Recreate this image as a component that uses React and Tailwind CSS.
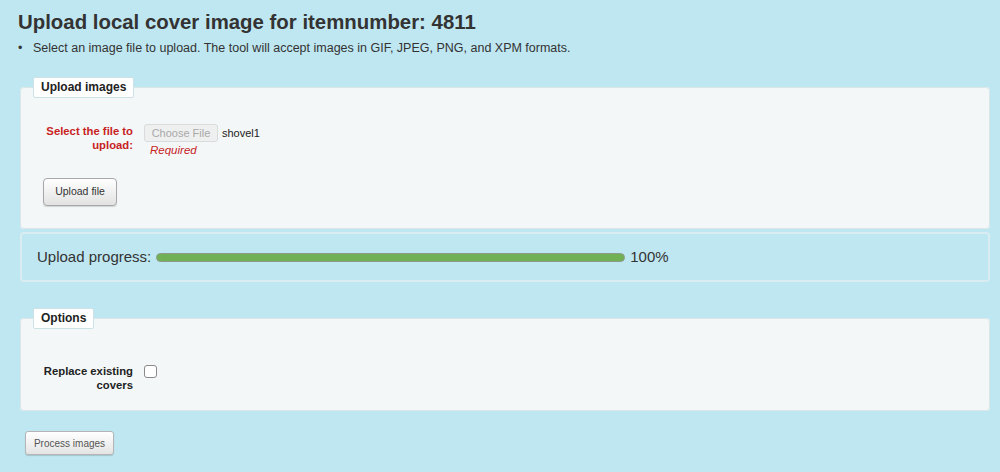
import React from 'react';

const font = { fontFamily: '"Liberation Sans", Arial, sans-serif' };

const Legend = ({ children }) => (
    <legend className="ml-[12px] px-[7px] py-[2px] bg-white border border-[#cde2e6] rounded-[2px] text-[12px] leading-[15px] font-bold text-[#222]">
        {children}
    </legend>
);

const App = () => {
    return (
        <div
            className="min-h-[472px] bg-[#bfe7f1] pl-[20px] pr-[10px] pt-[9px] pb-[16px] text-[#333]"
            style={font}
        >
            {/* Heading */}
            <h1 className="-ml-[2px] text-[20.4px] leading-[26px] font-bold text-[#333]">
                Upload local cover image for itemnumber: 4811
            </h1>
            <ul className="mt-[5px] -ml-[2px]">
                <li className="flex text-[12.5px] leading-[16px] text-[#333]">
                    <span className="w-[15px]">•</span>
                    <span>Select an image file to upload. The tool will accept images in GIF, JPEG, PNG, and XPM formats.</span>
                </li>
            </ul>

            {/* Upload images */}
            <fieldset className="mt-[21px] bg-[#f3f7f8] border border-[#dbe6e9] rounded-[4px] pb-[22px]">
                <Legend>Upload images</Legend>
                <div className="flex items-start pt-[26px]">
                    <label className="w-[112px] pl-[10px] text-right text-[11.3px] leading-[14px] font-bold text-[#c8231f]">
                        Select the file to upload:
                    </label>
                    <div className="ml-[11px] flex flex-col">
                        <div className="flex items-center">
                            <span className="h-[18px] w-[74px] flex items-center justify-center bg-[#eeefef] border border-[#d9dbdc] rounded-[3px] text-[11px] text-[#a9a9a9]">
                                Choose File
                            </span>
                            <span className="ml-[4px] text-[11px] text-[#222]">shovel1</span>
                        </div>
                        <span className="ml-[6px] mt-[1px] text-[11.5px] leading-[15px] italic text-[#c8231f]">Required</span>
                    </div>
                </div>
                <div className="pl-[22px] mt-[20px]">
                    <button className="h-[28px] w-[74px] rounded-[4px] border border-[#a8a8a8] bg-gradient-to-b from-white to-[#e2e2e2] shadow-[0_1px_1px_rgba(0,0,0,0.15)] text-[10.5px] text-[#333]">
                        Upload file
                    </button>
                </div>
            </fieldset>

            {/* Upload progress */}
            <div className="mt-[3px] h-[50px] flex items-center px-[15px] border-2 border-[#d8ecf1] rounded-[4px]">
                <span className="text-[15px] text-[#333]">Upload progress:</span>
                <div className="ml-[5px] w-[469px] h-[9px] rounded-full border border-[#8c9a8a] bg-[#72b153]" />
                <span className="ml-[5px] text-[15px] text-[#333]">100%</span>
            </div>

            {/* Options */}
            <fieldset className="mt-[26px] bg-[#f3f7f8] border border-[#dbe6e9] rounded-[4px] pb-[18px]">
                <Legend>Options</Legend>
                <div className="flex items-start pt-[35px]">
                    <label className="w-[112px] pl-[10px] text-right text-[11.3px] leading-[14px] font-bold text-[#222]">
                        Replace existing covers
                    </label>
                    <span className="ml-[11px] mt-[1px] w-[13px] h-[13px] rounded-[3px] border border-[#8a8a8a] bg-white" />
                </div>
            </fieldset>

            <button className="mt-[20px] ml-[5px] h-[24px] w-[89px] rounded-[3px] border border-[#b5b5b5] bg-gradient-to-b from-white to-[#e4e4e4] shadow-[0_1px_1px_rgba(0,0,0,0.15)] text-[10px] text-[#555]">
                Process images
            </button>
        </div>
    );
};

export default App;
